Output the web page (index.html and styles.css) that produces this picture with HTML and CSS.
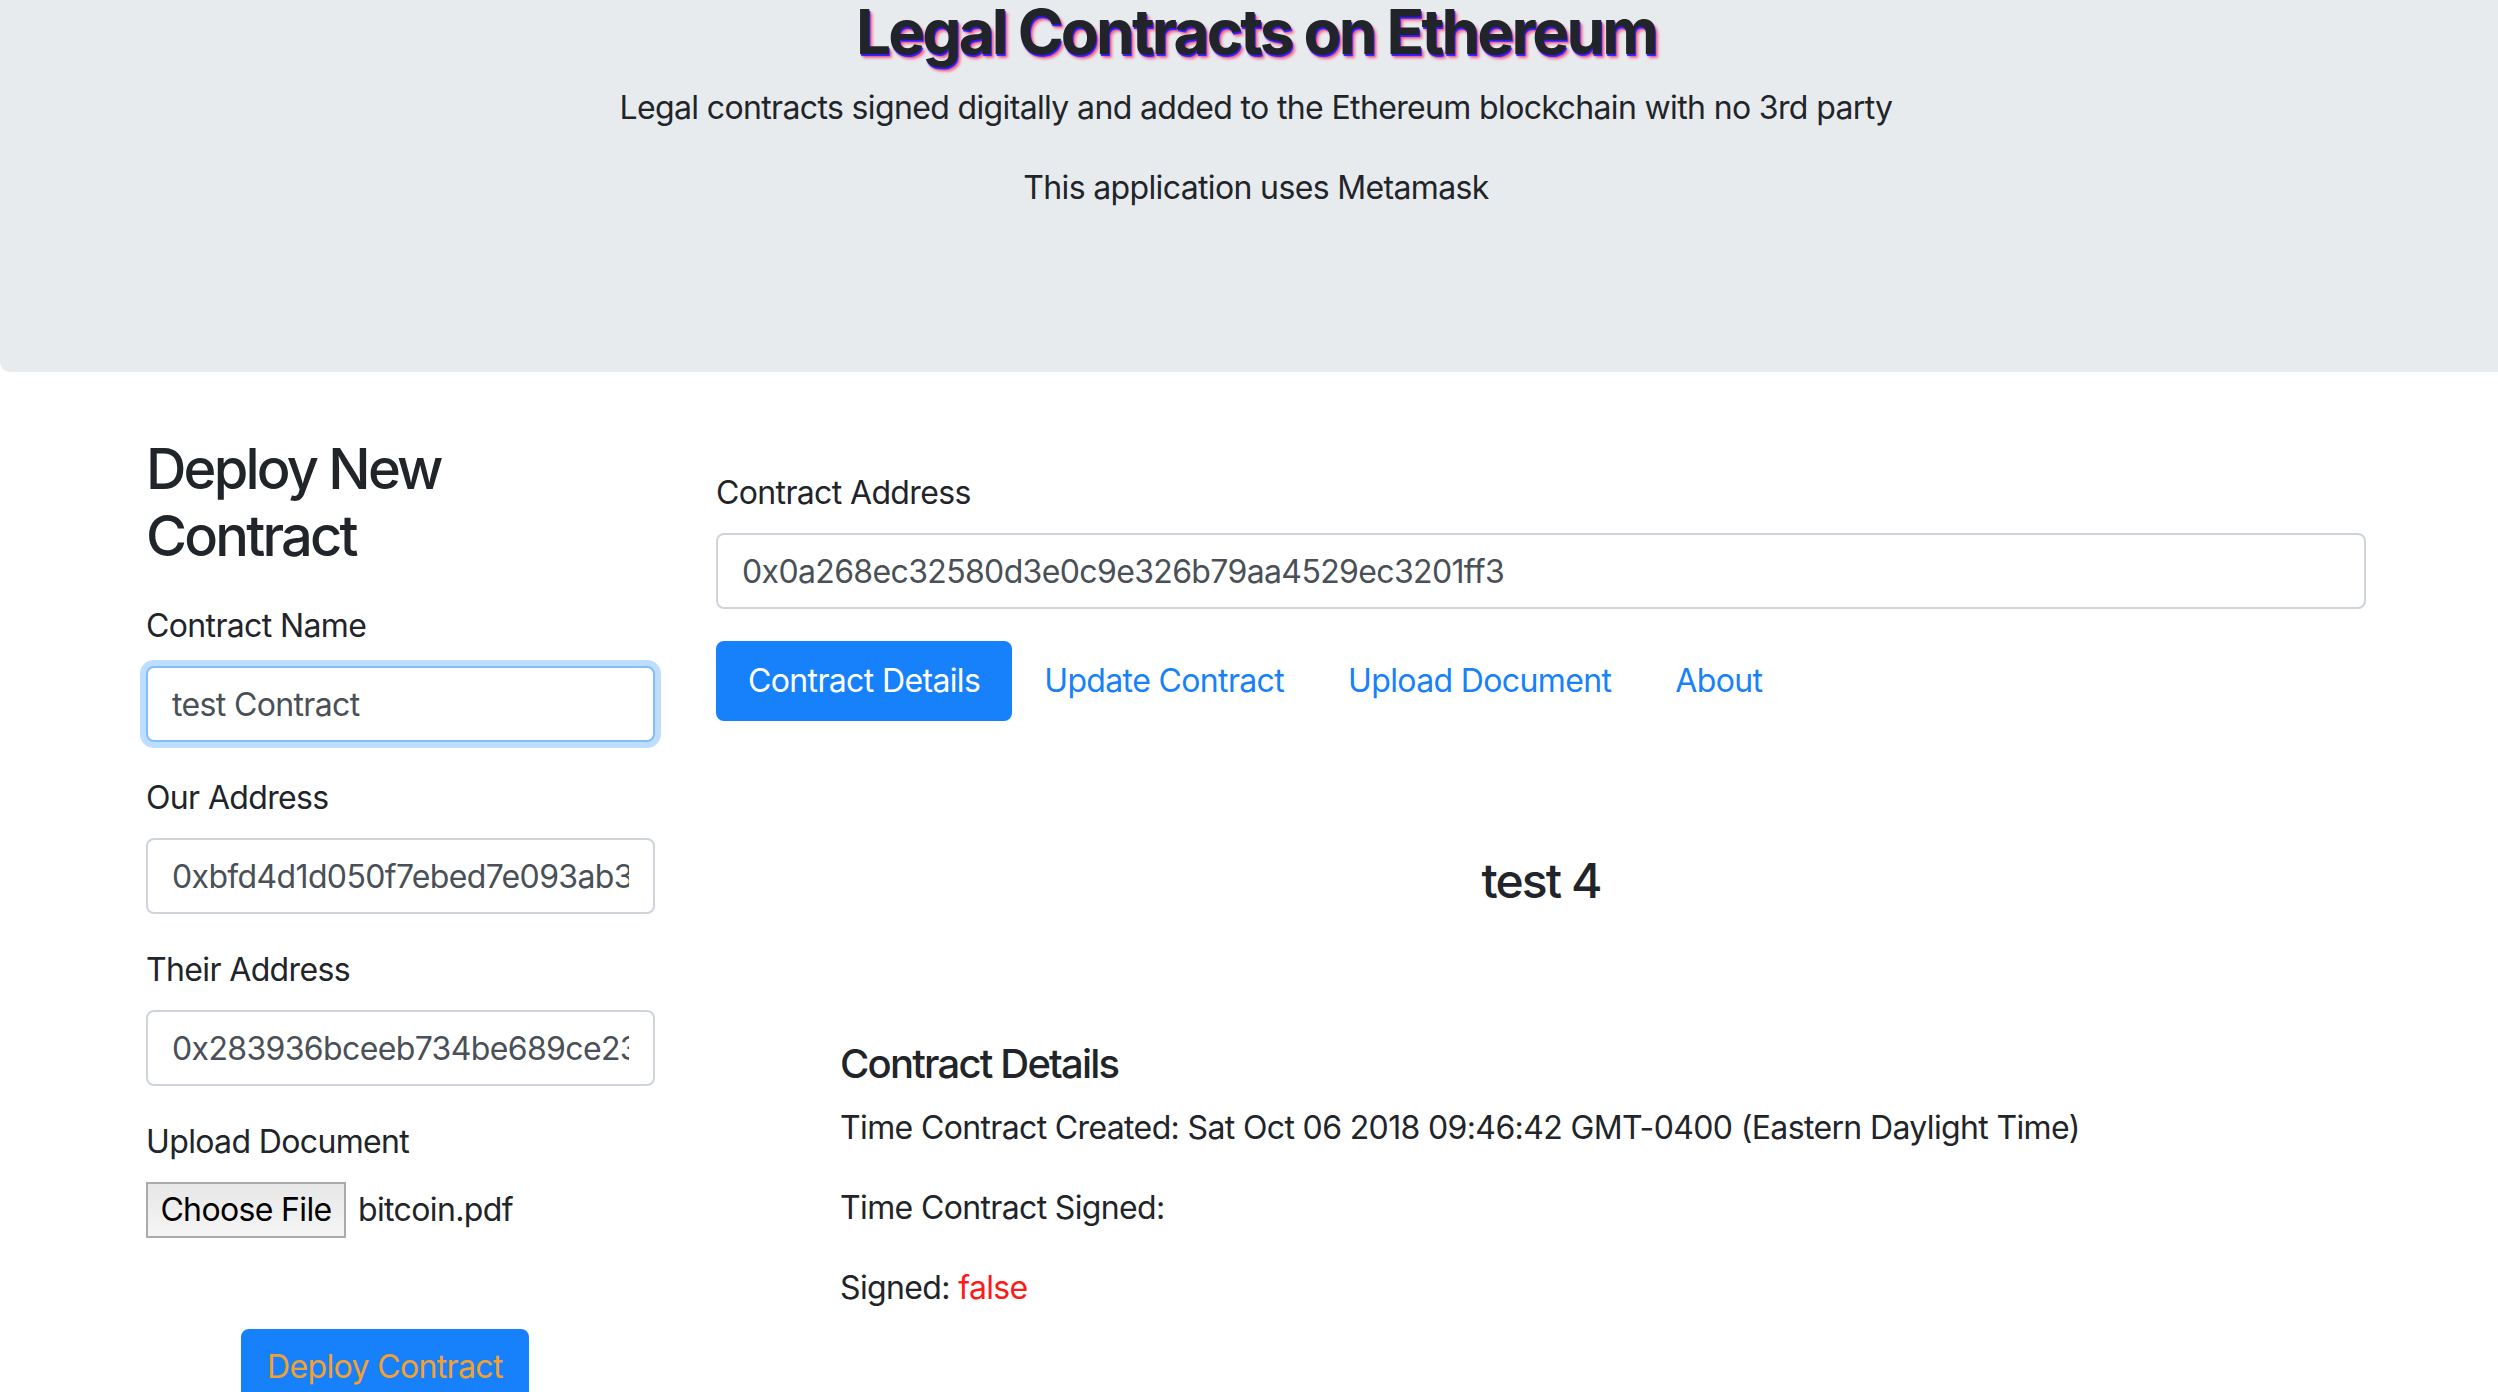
FILE: index.html
```html
<!DOCTYPE html>
<html lang="en">
<head>
<meta charset="utf-8">
<title>Legal Contracts on Ethereum</title>
<link rel="stylesheet" href="styles.css">
</head>
<body>
  <header class="jumbotron">
    <h1 class="title">Legal Contracts on Ethereum</h1>
    <p class="lead-line">Legal contracts signed digitally and added to the Ethereum blockchain with no 3rd party</p>
    <p class="lead-line">This application uses Metamask</p>
  </header>

  <main class="container">
    <section class="col-left">
      <h3 class="deploy-title">Deploy New Contract</h3>
      <div class="form-group">
        <label class="form-label" for="cname">Contract Name</label>
        <input class="form-control focused" id="cname" type="text" value="test Contract">
      </div>
      <div class="form-group">
        <label class="form-label" for="ours">Our Address</label>
        <input class="form-control" id="ours" type="text" value="0xbfd4d1d050f7ebed7e093ab3c1f92a7e6d0b4c51">
      </div>
      <div class="form-group">
        <label class="form-label" for="theirs">Their Address</label>
        <input class="form-control" id="theirs" type="text" value="0x283936bceeb734be689ce23a0f4e71c9d25b8a06">
      </div>
      <div class="form-group">
        <label class="form-label">Upload Document</label>
        <div class="file-row">
          <span class="file-btn">Choose File</span>
          <span class="file-name">bitcoin.pdf</span>
        </div>
      </div>
      <button class="btn-deploy" type="button">Deploy Contract</button>
    </section>

    <section class="col-right">
      <div class="form-group">
        <label class="form-label" for="caddr">Contract Address</label>
        <input class="form-control" id="caddr" type="text" value="0x0a268ec32580d3e0c9e326b79aa4529ec3201ff3">
      </div>
      <nav class="nav-pills">
        <a class="nav-link active" href="#details">Contract Details</a>
        <a class="nav-link" href="#update">Update Contract</a>
        <a class="nav-link" href="#upload">Upload Document</a>
        <a class="nav-link" href="#about">About</a>
      </nav>
      <div class="tab-content" id="details">
        <h4 class="contract-name">test 4</h4>
        <div class="details">
          <h5 class="details-title">Contract Details</h5>
          <p class="detail">Time Contract Created: Sat Oct 06 2018 09:46:42 GMT-0400 (Eastern Daylight Time)</p>
          <p class="detail">Time Contract Signed: </p>
          <p class="detail">Signed: <span class="false">false</span></p>
        </div>
      </div>
    </section>
  </main>
</body>
</html>
```

FILE: styles.css
```css
* { box-sizing: border-box; }

html, body {
  margin: 0;
  padding: 0;
  background: #ffffff;
  overflow: hidden;
}

body {
  font-family: "Inter", "Noto Sans", "Liberation Sans", sans-serif;
  font-size: 32px;
  line-height: 1.5;
  letter-spacing: -0.02em;
  color: #212529;
}

.jumbotron {
  background: #e8ebee;
  padding: 0 0 128px 14px;
  margin: 0 0 64px 0;
  text-align: center;
  border-bottom-left-radius: 10px;
}

.title {
  margin: 0 0 20px 0;
  font-size: 62px;
  line-height: 64px;
  font-weight: 700;
  letter-spacing: -0.045em;
  color: #212529;
  text-shadow: 1px 2px 1px #2b1bff, 3px 4px 3px rgba(255, 40, 90, 0.7);
}

.lead-line {
  margin: 0 0 32px 0;
}

.container {
  display: grid;
  grid-template-columns: 509px 1650px;
  column-gap: 61px;
  margin-left: 146px;
}

.deploy-title {
  margin: 0 0 32px 0;
  font-size: 56px;
  line-height: 1.2;
  font-weight: 500;
  letter-spacing: -0.05em;
}

.form-group { margin-bottom: 32px; }

.form-label {
  display: block;
  margin-bottom: 16px;
}

.form-control {
  display: block;
  width: 100%;
  height: 76px;
  padding: 12px 24px;
  font-family: inherit;
  font-size: 32px;
  line-height: 1.5;
  letter-spacing: -0.02em;
  color: #495057;
  background: #ffffff;
  border: 2px solid #ced4da;
  border-radius: 8px;
  outline: none;
}

.form-control.focused {
  border-color: #80bdff;
  box-shadow: 0 0 0 6px rgba(0, 123, 255, 0.25);
}

.file-row {
  display: flex;
  align-items: center;
  gap: 12px;
}

.file-btn {
  display: inline-block;
  width: 200px;
  height: 56px;
  line-height: 52px;
  text-align: center;
  color: #000000;
  background: linear-gradient(#e7e7e7, #f5f5f5);
  border: 2px solid #ababab;
}

.btn-deploy {
  display: block;
  margin: 91px 0 0 95px;
  padding: 12px 24px;
  font-family: inherit;
  font-size: 32px;
  line-height: 1.5;
  letter-spacing: -0.02em;
  color: #f5a02c;
  background: #1781fb;
  border: 2px solid #1781fb;
  border-radius: 8px;
}

.col-right { padding-top: 33px; }

.nav-pills {
  display: flex;
}

.nav-link {
  display: block;
  padding: 16px 32px;
  color: #1781fb;
  text-decoration: none;
  border-radius: 8px;
}

.nav-link.active {
  color: #ffffff;
  background: #1781fb;
}

.tab-content { padding-top: 131px; }

.contract-name {
  margin: 0;
  font-size: 48px;
  line-height: 1.2;
  font-weight: 500;
  letter-spacing: -0.04em;
  text-align: center;
}

.details {
  padding: 130px 0 0 124px;
}

.details-title {
  margin: 0 0 16px 0;
  font-size: 40px;
  line-height: 1.2;
  font-weight: 500;
  letter-spacing: -0.045em;
}

.detail { margin: 0 0 32px 0; }

.false { color: #ff1a1a; }
```
